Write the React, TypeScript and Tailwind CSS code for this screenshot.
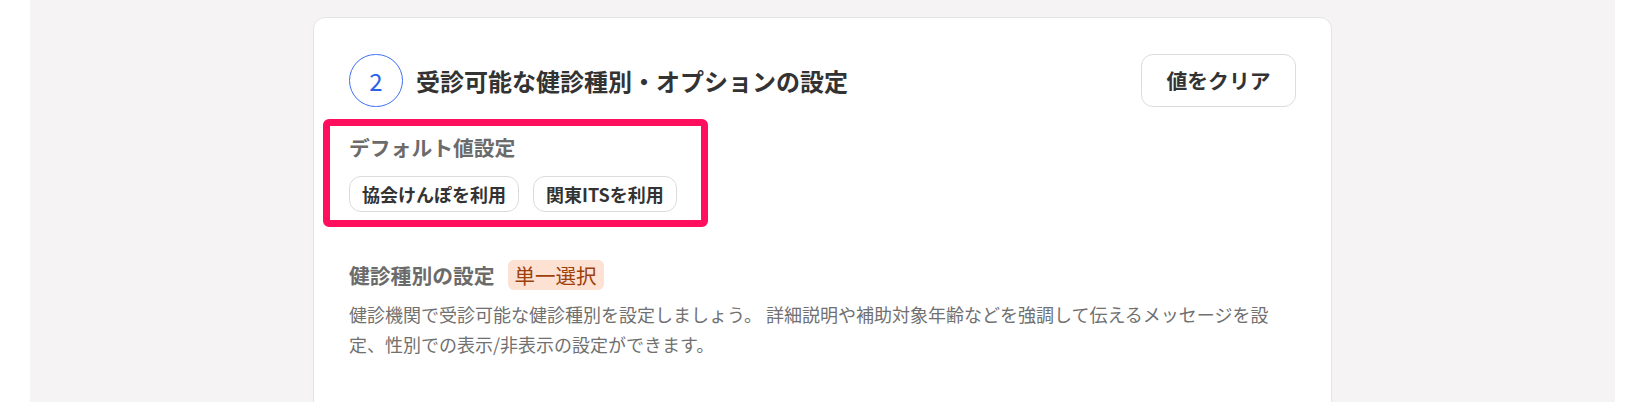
import React from "react";

export default function App() {
  return (
    <div
      className="flex h-[402px] w-full overflow-hidden bg-white"
      style={{ fontFamily: '"Noto Sans CJK JP", "Noto Sans", sans-serif' }}
    >
      <div className="w-[30px] shrink-0 bg-white" />
      <div className="flex-1 bg-[#f5f3f4] pt-[17px]">
        <div className="mx-auto h-[420px] w-[1019px] rounded-t-[12px] border border-[#e4e4e4] bg-white px-[35px] pt-[36px]">
          {/* Header */}
          <div className="flex h-[53px] items-center justify-between">
            <div className="flex items-center gap-[13px]">
              <div className="flex h-[53px] w-[54px] items-center justify-center rounded-full border border-[#3d6ef2] text-[24px] leading-none text-[#2d62e6]">
                2
              </div>
              <h2 className="text-[24px] font-bold leading-none text-[#333333]">
                受診可能な健診種別・オプションの設定
              </h2>
            </div>
            <button className="h-[53px] w-[155px] rounded-[12px] border border-[#dcdcdc] bg-white text-[20.8px] font-bold text-[#333333]">
              値をクリア
            </button>
          </div>

          {/* Default settings (highlighted) */}
          <div className="-ml-[26px] mt-[12px] w-[385px] rounded-[6px] border-[7px] border-[#ff0f5d] pb-[8px] pl-[19px] pt-[6.5px]">
            <p className="text-[20.8px] font-bold leading-[28px] text-[#6b6b6b]">
              デフォルト値設定
            </p>
            <div className="mt-[15.5px] flex gap-[14px]">
              <button className="h-[36px] rounded-[12px] border border-[#dcdcdc] bg-white px-[12px] text-[18px] font-bold leading-none text-[#333333]">
                協会けんぽを利用
              </button>
              <button className="h-[36px] rounded-[12px] border border-[#dcdcdc] bg-white px-[12px] text-[18px] font-bold leading-none text-[#333333]">
                関東ITSを利用
              </button>
            </div>
          </div>

          {/* Exam type settings */}
          <div className="mt-[33px]">
            <div className="flex items-center gap-[13px]">
              <h3 className="text-[20.8px] font-bold leading-[30px] text-[#6b6b6b]">
                健診種別の設定
              </h3>
              <span className="rounded-[6px] bg-[#fde1d3] px-[7px] text-[20.5px] leading-[30px] text-[#9c400c]">
                単一選択
              </span>
            </div>
            <p className="mt-[10px] text-[18px] leading-[29.5px] text-[#707070]">
              健診機関で受診可能な健診種別を設定しましょう。 詳細説明や補助対象年齢などを強調して伝えるメッセージを設定、性別での表示/非表示の設定ができます。
            </p>
          </div>
        </div>
      </div>
      <div className="w-[27px] shrink-0 bg-white" />
    </div>
  );
}
